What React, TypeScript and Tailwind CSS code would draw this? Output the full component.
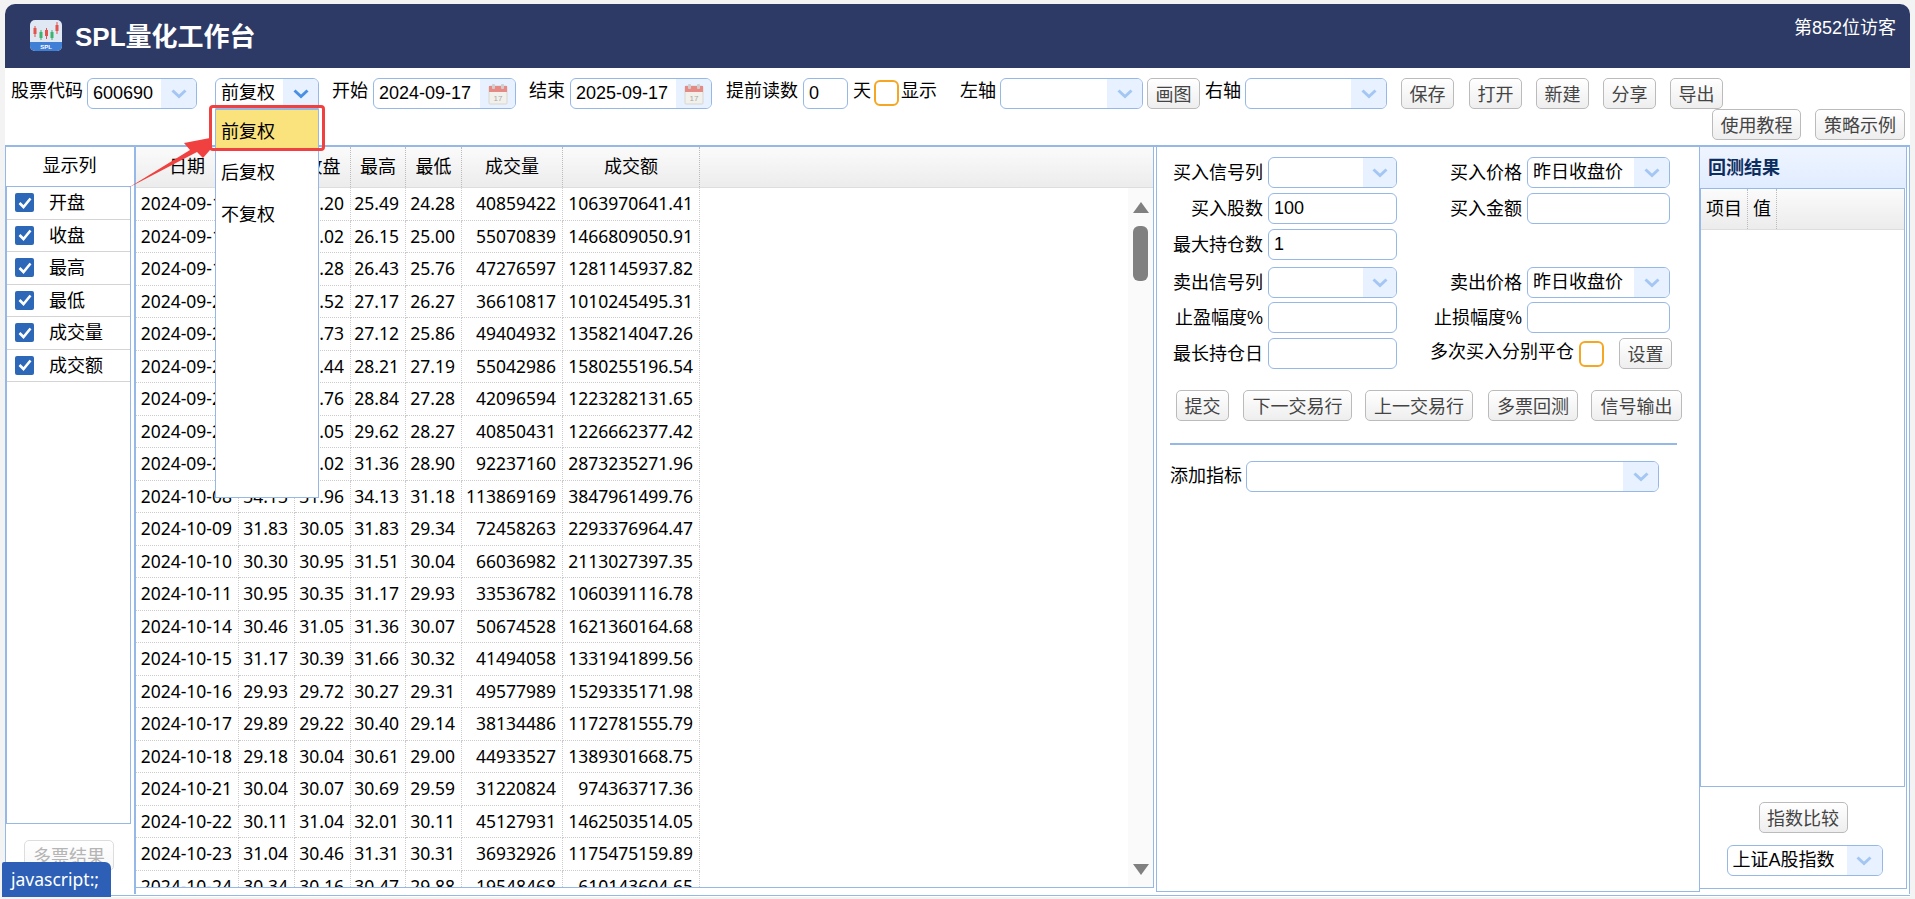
import React from "react";

const FONT = '"Liberation Sans","Noto Sans CJK SC",sans-serif';

function Chevron({ strong }: { strong?: boolean }) {
  return (
    <svg width="18" height="11" viewBox="0 0 18 11" fill="none">
      <path d="M2.5 2.5 L9 8.5 L15.5 2.5" stroke={strong ? "#4a90e2" : "#a4c6f2"} strokeWidth="3" />
    </svg>
  );
}

function CalendarIcon() {
  return (
    <svg width="20" height="22" viewBox="0 0 20 22">
      <rect x="1" y="3" width="18" height="18" rx="1" fill="#f2f0ea" stroke="#d8d6d0" />
      <rect x="1" y="3" width="18" height="6" fill="#e58a84" />
      <rect x="4" y="1" width="3" height="5" rx="1" fill="#cfcfcf" />
      <rect x="13" y="1" width="3" height="5" rx="1" fill="#cfcfcf" />
      <text x="10" y="18" fontSize="8" textAnchor="middle" fill="#a9a9a9" fontFamily="Liberation Sans">17</text>
    </svg>
  );
}

function Field({ w, value = "", arrow, strong, cal, h = "h-[31px]", boxW = "w-[35px]", open }: { w: string; value?: string; arrow?: boolean; strong?: boolean; cal?: boolean; h?: string; boxW?: string; open?: boolean }) {
  return (
    <div className={`${w} ${h} ${open ? "rounded-t-[6px]" : "rounded-[6px]"} shrink-0 flex items-stretch overflow-hidden border border-[#95b8e7] bg-white`}>
      <span className="flex-1 pl-[5px] leading-[29px] text-[18px] text-black whitespace-nowrap overflow-hidden">{value}</span>
      {arrow && <span className={`${boxW} bg-[#e8f1ff] flex items-center justify-center`}><Chevron strong={strong} /></span>}
      {cal && <span className={`${boxW} bg-[#e8f1ff] flex items-center justify-center`}><CalendarIcon /></span>}
    </div>
  );
}

function Btn({ w, children, disabled }: { w: string; children: React.ReactNode; disabled?: boolean }) {
  return (
    <button className={`${w} h-[31px] pt-[2px] shrink-0 rounded-[5px] border text-[18px] leading-[26px] text-center whitespace-nowrap bg-gradient-to-b ${disabled ? "border-[#dddddd] from-white to-[#f7f7f7] text-[#b5b5b5]" : "border-[#bbbbbb] from-white to-[#eeeeee] text-[#444444]"}`}>
      {children}
    </button>
  );
}

function Orange({ size }: { size: string }) {
  return <span className={`${size} shrink-0 block rounded-[6px] border-2 border-[#f5a623] bg-white`} />;
}

function Logo() {
  return (
    <svg width="32" height="31" viewBox="0 0 32 31" className="shrink-0">
      <rect x="0" y="0" width="32" height="31" rx="5" fill="#dfe8f3" />
      <path d="M0 22 H32 V26 a5 5 0 0 1 -5 5 H5 a5 5 0 0 1 -5 -5 Z" fill="#3f7fd6" />
      <g strokeWidth="1">
        <path d="M5 6 V17" stroke="#e2554f" />
        <rect x="3.5" y="8" width="3" height="6" fill="#e2554f" />
        <path d="M11 10 V20" stroke="#3db46d" />
        <rect x="9.5" y="12" width="3" height="6" fill="#3db46d" />
        <path d="M16.5 8 V19" stroke="#e2554f" />
        <rect x="15" y="10" width="3" height="6" fill="#e2554f" />
        <path d="M22 10 V20" stroke="#3db46d" />
        <rect x="20.5" y="12" width="3" height="6" fill="#3db46d" />
        <path d="M27 2 V14" stroke="#e2554f" />
        <rect x="25.5" y="5" width="3" height="6" fill="#e2554f" />
      </g>
      <text x="16" y="29" fontSize="6" fontWeight="700" textAnchor="middle" fill="#fff" fontFamily="Liberation Sans">SPL</text>
    </svg>
  );
}

const ROWS: string[][] = [
  ["2024-09-17", "24.48", "25.20", "25.49", "24.28", "40859422", "1063970641.41"],
  ["2024-09-18", "25.20", "26.02", "26.15", "25.00", "55070839", "1466809050.91"],
  ["2024-09-19", "26.02", "26.28", "26.43", "25.76", "47276597", "1281145937.82"],
  ["2024-09-20", "26.28", "26.52", "27.17", "26.27", "36610817", "1010245495.31"],
  ["2024-09-23", "26.52", "26.73", "27.12", "25.86", "49404932", "1358214047.26"],
  ["2024-09-24", "26.73", "27.44", "28.21", "27.19", "55042986", "1580255196.54"],
  ["2024-09-25", "28.44", "28.76", "28.84", "27.28", "42096594", "1223282131.65"],
  ["2024-09-26", "28.76", "29.05", "29.62", "28.27", "40850431", "1226662377.42"],
  ["2024-09-27", "29.05", "31.02", "31.36", "28.90", "92237160", "2873235271.96"],
  ["2024-10-08", "34.13", "31.96", "34.13", "31.18", "113869169", "3847961499.76"],
  ["2024-10-09", "31.83", "30.05", "31.83", "29.34", "72458263", "2293376964.47"],
  ["2024-10-10", "30.30", "30.95", "31.51", "30.04", "66036982", "2113027397.35"],
  ["2024-10-11", "30.95", "30.35", "31.17", "29.93", "33536782", "1060391116.78"],
  ["2024-10-14", "30.46", "31.05", "31.36", "30.07", "50674528", "1621360164.68"],
  ["2024-10-15", "31.17", "30.39", "31.66", "30.32", "41494058", "1331941899.56"],
  ["2024-10-16", "29.93", "29.72", "30.27", "29.31", "49577989", "1529335171.98"],
  ["2024-10-17", "29.89", "29.22", "30.40", "29.14", "38134486", "1172781555.79"],
  ["2024-10-18", "29.18", "30.04", "30.61", "29.00", "44933527", "1389301668.75"],
  ["2024-10-21", "30.04", "30.07", "30.69", "29.59", "31220824", "974363717.36"],
  ["2024-10-22", "30.11", "31.04", "32.01", "30.11", "45127931", "1462503514.05"],
  ["2024-10-23", "31.04", "30.46", "31.31", "30.31", "36932926", "1175475159.89"],
  ["2024-10-24", "30.34", "30.16", "30.47", "29.88", "19548468", "610143604.65"],
];
const HEADS = ["日期", "开盘", "收盘", "最高", "最低", "成交量", "成交额"];
const WIDTHS = ["w-[103px]", "w-[56px]", "w-[56px]", "w-[55px]", "w-[56px]", "w-[101px]", "w-[137px]"];
const COLS = ["开盘", "收盘", "最高", "最低", "成交量", "成交额"];

function Row({ mt, children }: { mt: string; children: React.ReactNode }) {
  return <div className={`flex items-center h-[31px] ${mt}`}>{children}</div>;
}
function Lab({ w, children, cls = "pt-[2px]" }: { w: string; children: React.ReactNode; cls?: string }) {
  return <span className={`${w} shrink-0 text-right text-[18px] text-black whitespace-nowrap ${cls}`}>{children}</span>;
}

export default function App() {
  return (
    <div className="relative w-[1915px] h-[899px] overflow-hidden bg-[#f3f3f3] pt-1 px-[5px] text-[18px] text-black" style={{ fontFamily: FONT }}>
      <div className="bg-white h-[893px] rounded-t-[10px]">
        <header className="h-[64px] bg-[#2c3a65] rounded-t-[10px] flex pl-[25px] pr-[14px] text-white">
          <div className="flex items-center h-full gap-[13px] pb-[2px]">
            <Logo />
            <span className="text-[26px] font-bold mt-[5px]">SPL量化工作台</span>
          </div>
          <span className="ml-auto mt-[12px] text-[18px] leading-[24px]">第852位访客</span>
        </header>

        <div className="h-[77px] relative">
          <div className="flex items-start pt-[10px] pl-[6px]">
            <span className="leading-[26px] w-[76px] shrink-0">股票代码</span>
            <Field w="w-[110px]" value="600690" arrow />
            <div className="relative ml-[18px]">
              <Field w="w-[104px]" value="前复权" arrow strong open />
              <div className="absolute z-20 left-0 top-[31px] w-[104px] h-[389px] bg-white border border-[#95b8e7] text-[18px]">
                <div className="h-[39px] bg-[#fae27c] pl-[5px] pt-[6px] leading-[33px]">前复权</div>
                <div className="h-[42px] pl-[5px] pt-[7px] leading-[35px]">后复权</div>
                <div className="h-[42px] pl-[5px] pt-[7px] leading-[35px]">不复权</div>
              </div>
              <div className="absolute z-30 left-[-6px] top-[27px] w-[116px] h-[46px] border-[3px] border-[#f04040] rounded-[4px]" />
            </div>
            <span className="ml-[13px] w-[41px] shrink-0 leading-[26px]">开始</span>
            <Field w="w-[143px]" value="2024-09-17" cal />
            <span className="ml-[13px] w-[41px] shrink-0 leading-[26px]">结束</span>
            <Field w="w-[142px]" value="2025-09-17" cal />
            <span className="ml-[14px] w-[77px] shrink-0 leading-[26px]">提前读数</span>
            <Field w="w-[45px]" value="0" />
            <span className="ml-[5px] w-[21px] shrink-0 leading-[26px]">天</span>
            <span className="mt-[2px]"><Orange size="w-[25px] h-[26px]" /></span>
            <span className="ml-[2px] w-[59px] shrink-0 leading-[26px]">显示</span>
            <span className="w-[40px] shrink-0 leading-[26px]">左轴</span>
            <Field w="w-[143px]" arrow />
            <span className="ml-[4px]"><Btn w="w-[53px]">画图</Btn></span>
            <span className="ml-[5px] w-[40px] shrink-0 leading-[26px]">右轴</span>
            <Field w="w-[142px]" arrow />
            <span className="ml-[14px]"><Btn w="w-[53px]">保存</Btn></span>
            <span className="ml-[15px]"><Btn w="w-[53px]">打开</Btn></span>
            <span className="ml-[14px]"><Btn w="w-[53px]">新建</Btn></span>
            <span className="ml-[14px]"><Btn w="w-[53px]">分享</Btn></span>
            <span className="ml-[14px]"><Btn w="w-[53px]">导出</Btn></span>
          </div>
          <div className="flex justify-end gap-[14px] pr-[5px]">
            <Btn w="w-[89px]">使用教程</Btn>
            <Btn w="w-[90px]">策略示例</Btn>
          </div>
        </div>

        <div className="flex h-[749px] border-t-2 border-[#95b8e7] border-l border-r">
          <aside className="w-[130px] shrink-0 border-r-2 border-[#95b8e7] flex flex-col">
            <div className="h-[39px] text-center leading-[38px] pr-[1px]">显示列</div>
            <div className="w-[125px] h-[638px] border border-[#95b8e7]">
              {COLS.map((c) => (
                <div key={c} className="h-[32.5px] border-b border-[#d4d4d4] flex items-center pl-[8px]">
                  <span className="w-[19px] h-[19px] rounded-[2px] bg-[#2d68b8] flex items-center justify-center">
                    <svg width="14" height="12" viewBox="0 0 14 12" fill="none"><path d="M1.5 6 L5.5 10 L12.5 1.5" stroke="#fff" strokeWidth="2.6" /></svg>
                  </span>
                  <span className="ml-[15px] pt-[2px]">{c}</span>
                </div>
              ))}
            </div>
            <div className="mt-[16px] ml-[18px]"><Btn w="w-[90px]" disabled>多票结果</Btn></div>
          </aside>

          <main className="w-[1018px] shrink-0 h-[741px] border-r border-b border-[#95b8e7] flex flex-col overflow-hidden">
            <div className="h-[41px] shrink-0 flex bg-gradient-to-b from-[#fbfbfb] to-[#ececec] border-b border-[#dddddd]">
              {HEADS.map((h, i) => (
                <div key={h} className={`${WIDTHS[i]} shrink-0 border-r border-dotted border-[#bbbbbb] text-center leading-[40px]`}>{h}</div>
              ))}
            </div>
            <div className="flex flex-1 min-h-0">
              <div className="flex-1 overflow-hidden font-['Noto_Sans','Noto_Sans_CJK_SC',sans-serif]">
                {ROWS.map((r) => (
                  <div key={r[0]} className="flex h-[32.5px] shrink-0">
                    {r.map((v, i) => (
                      <div key={i} className={`${WIDTHS[i]} shrink-0 border-r border-b border-dotted border-[#cccccc] text-right pr-[6px] leading-[31px] text-[17.5px] whitespace-nowrap`}>{v}</div>
                    ))}
                  </div>
                ))}
              </div>
              <div className="w-[25px] shrink-0 bg-[#fafafa] flex flex-col items-center pt-[14px]">
                <svg width="16" height="11" viewBox="0 0 16 11"><path d="M8 0 L16 11 H0 Z" fill="#808080" /></svg>
                <span className="block w-[15px] h-[55px] mt-[13px] rounded-[6px] bg-[#808080]" />
                <svg className="mt-[583px]" width="16" height="11" viewBox="0 0 16 11"><path d="M8 11 L16 0 H0 Z" fill="#808080" /></svg>
              </div>
            </div>
          </main>

          <section className="ml-[2px] w-[544px] shrink-0 h-[745px] border-l border-r border-b border-[#95b8e7] pl-[1px] pt-[10px]">
            <Row mt="mt-0">
              <Lab w="w-[105px]">买入信号列</Lab><span className="ml-[5px]" /><Field w="w-[129px]" arrow boxW="w-[33px]" />
              <Lab w="w-[125px]">买入价格</Lab><span className="ml-[5px]" /><Field w="w-[143px]" value="昨日收盘价" arrow boxW="w-[35px]" />
            </Row>
            <Row mt="mt-[5px]">
              <Lab w="w-[105px]">买入股数</Lab><span className="ml-[5px]" /><Field w="w-[129px]" value="100" />
              <Lab w="w-[125px]">买入金额</Lab><span className="ml-[5px]" /><Field w="w-[143px]" />
            </Row>
            <Row mt="mt-[5px]">
              <Lab w="w-[105px]">最大持仓数</Lab><span className="ml-[5px]" /><Field w="w-[129px]" value="1" />
            </Row>
            <Row mt="mt-[7px]">
              <Lab w="w-[105px]">卖出信号列</Lab><span className="ml-[5px]" /><Field w="w-[129px]" arrow boxW="w-[33px]" />
              <Lab w="w-[125px]">卖出价格</Lab><span className="ml-[5px]" /><Field w="w-[143px]" value="昨日收盘价" arrow boxW="w-[35px]" />
            </Row>
            <Row mt="mt-[4px]">
              <Lab w="w-[105px]">止盈幅度%</Lab><span className="ml-[5px]" /><Field w="w-[129px]" />
              <Lab w="w-[125px]">止损幅度%</Lab><span className="ml-[5px]" /><Field w="w-[143px]" />
            </Row>
            <Row mt="mt-[5px]">
              <Lab w="w-[105px]">最长持仓日</Lab><span className="ml-[5px]" /><Field w="w-[129px]" />
              <Lab w="w-[177px]" cls="mb-[2px]">多次买入分别平仓</Lab>
              <span className="ml-[5px]"><Orange size="w-[25px] h-[26px]" /></span>
              <span className="ml-[15px]"><Btn w="w-[53px]">设置</Btn></span>
            </Row>
            <div className="flex mt-[21px] pl-[18px]">
              <Btn w="w-[53px]">提交</Btn>
              <span className="ml-[14px]"><Btn w="w-[109px]">下一交易行</Btn></span>
              <span className="ml-[13px]"><Btn w="w-[108px]">上一交易行</Btn></span>
              <span className="ml-[15px]"><Btn w="w-[90px]">多票回测</Btn></span>
              <span className="ml-[13px]"><Btn w="w-[91px]">信号输出</Btn></span>
            </div>
            <div className="mt-[22px] ml-[12px] w-[507px] h-[2px] bg-[#95b8e7]" />
            <div className="flex items-center mt-[16px] ml-[12px]">
              <span className="w-[76px] shrink-0">添加指标</span>
              <Field w="w-[413px]" arrow />
            </div>
          </section>

          <section className="w-[207px] shrink-0 h-[742px] border-r border-b border-[#95b8e7] flex flex-col">
            <div className="h-[41px] shrink-0 bg-gradient-to-b from-[#eff5ff] to-[#e0ecff] text-[#0e2d5f] font-bold text-[18px] leading-[43px] pl-[8px]">回测结果</div>
            <div className="h-[599px] mr-[1px] shrink-0 border border-[#95b8e7]">
              <div className="h-[41px] flex bg-gradient-to-b from-[#fbfbfb] to-[#ececec] border-b border-[#dddddd] leading-[40px]">
                <div className="w-[47px] border-r border-dotted border-[#bbbbbb] text-center">项目</div>
                <div className="w-[29px] border-r border-dotted border-[#bbbbbb] text-center">值</div>
              </div>
            </div>
            <div className="flex flex-col items-center mt-[15px]">
              <Btn w="w-[89px]">指数比较</Btn>
              <div className="mt-[12px] ml-[3px]"><Field w="w-[156px]" value="上证A股指数" arrow boxW="w-[35px]" /></div>
            </div>
          </section>
        </div>
      </div>

      <div className="absolute left-[5px] right-[5px] top-[895px] h-[1px] bg-[#95b8e7]" />

      <svg className="absolute z-30 left-[125px] top-[130px]" width="95" height="65" viewBox="0 0 95 65">
        <path d="M3 58 L65 20 L59 13 L85 8 L85 20 L78 28 L72 22 Z" fill="#f04040" />
      </svg>

      <div className="absolute z-40 left-[2px] top-[862px] w-[109px] h-[35px] bg-[#2c5fb5] rounded-tr-[6px] rounded-tl-[2px] text-white text-[17.5px] leading-[34px] pl-[9px] font-['Noto_Sans',sans-serif]">javascript:;</div>
    </div>
  );
}
